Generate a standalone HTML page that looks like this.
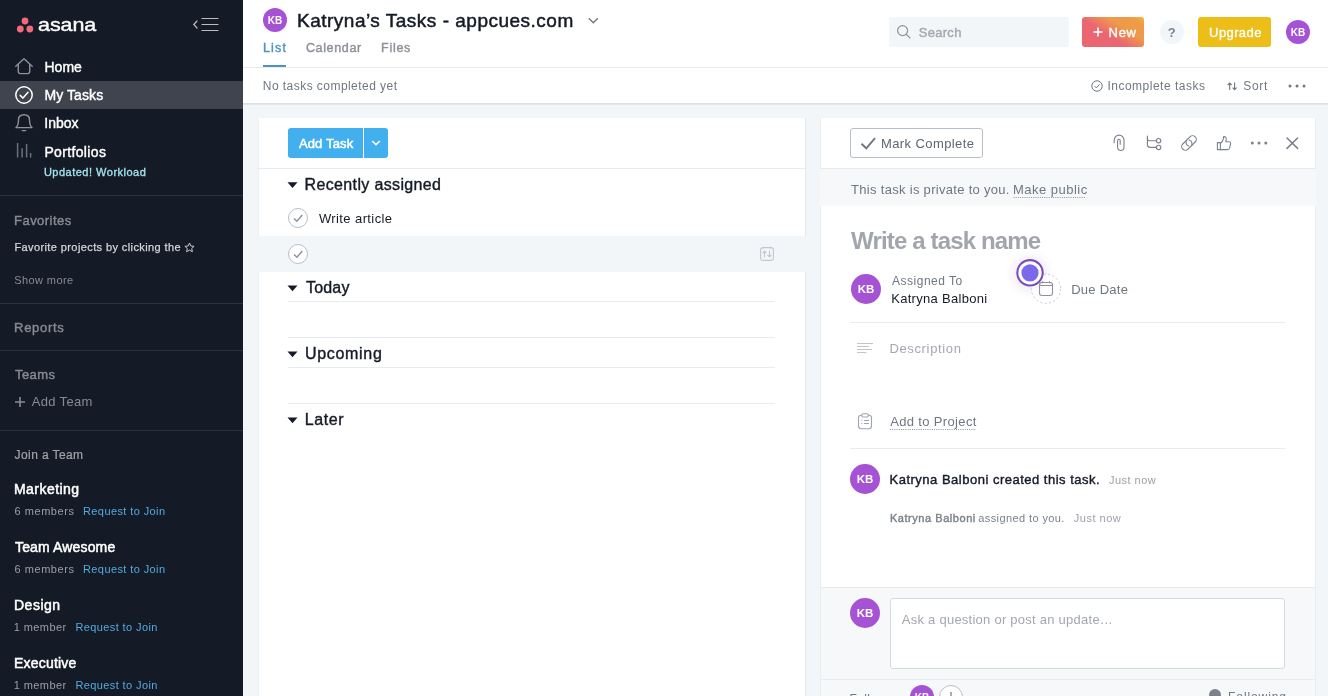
<!DOCTYPE html>
<html><head><meta charset="utf-8"><title>Asana - My Tasks</title>
<style>
*{box-sizing:border-box;margin:0;padding:0}
html,body{width:1328px;height:696px;overflow:hidden}
body{font-family:"Liberation Sans",sans-serif;background:#f3f6f9;color:#151b26;position:relative}
.t{position:absolute;white-space:pre;line-height:20px;height:20px}
.b{position:absolute}
.av{position:absolute;border-radius:50%;background:#a552d4;color:#fff;font-weight:bold;text-align:center}
svg{position:absolute;overflow:visible}
</style></head><body>
<div id="root" style="position:absolute;left:0;top:0;width:1328px;height:696px;will-change:transform">

<!-- ================= SIDEBAR ================= -->
<div class="b" style="left:0;top:0;width:243px;height:696px;background:#151b26"></div>
<div class="b" style="left:0;top:81px;width:243px;height:28px;background:#3f444e"></div>
<div class="b" style="left:0;top:195px;width:243px;height:1px;background:#2c323d"></div>
<div class="b" style="left:0;top:303px;width:243px;height:1px;background:#2c323d"></div>
<div class="b" style="left:0;top:350px;width:243px;height:1px;background:#2c323d"></div>
<div class="b" style="left:0;top:430px;width:243px;height:1px;background:#2c323d"></div>

<!-- logo dots -->
<svg style="left:0;top:0" width="243" height="200" viewBox="0 0 243 200">
  <circle cx="25" cy="21" r="3.4" fill="#f1697a"/>
  <circle cx="20.3" cy="29" r="3.4" fill="#f1697a"/>
  <circle cx="29.8" cy="29" r="3.4" fill="#f1697a"/>
  <!-- collapse icon -->
  <g stroke="#b9bcc1" stroke-width="1.2" fill="none" stroke-linecap="round">
    <path d="M202 18.5H218M202 24.5H218M202 30.5H218"/>
    <path d="M197 21L193.8 24.5L197 28"/>
  </g>
  <!-- home -->
  <g stroke="#8d929a" stroke-width="1.4" fill="none" stroke-linejoin="round" stroke-linecap="round">
    <path d="M15.8 66.2L24 58.8L32.2 66.2"/>
    <path d="M18.3 64.5V71.5Q18.3 73.6 20.4 73.6H27.6Q29.7 73.6 29.7 71.5V64.5"/>
  </g>
  <!-- my tasks check -->
  <g stroke="#ffffff" stroke-width="1.5" fill="none" stroke-linecap="round" stroke-linejoin="round">
    <circle cx="24" cy="95" r="8.2"/>
    <path d="M20.2 95.4L23 98.1L28 92.3"/>
  </g>
  <!-- bell -->
  <g stroke="#8d929a" stroke-width="1.4" fill="none" stroke-linecap="round" stroke-linejoin="round">
    <path d="M16 127.6H32Q29.6 125.6 29.6 122V120.4Q29.6 114.8 24 114.8Q18.4 114.8 18.4 120.4V122Q18.4 125.6 16 127.6Z"/>
    <path d="M22.3 130.6H25.7"/>
  </g>
  <!-- portfolios bars -->
  <g stroke="#6b717b" stroke-width="1.5" fill="none">
    <path d="M17.6 143V157.6M22.1 148.3V157.6M26.6 144V157.6M30.6 153V157.6"/>
  </g>
</svg>
<!-- star after "Favorite projects by clicking the" -->
<svg style="left:184.3px;top:241.6px" width="11" height="11" viewBox="0 0 13 13"><path d="M6.5 1.2L8.1 4.7L11.9 5.1L9.1 7.7L9.9 11.5L6.5 9.6L3.1 11.5L3.9 7.7L1.1 5.1L4.9 4.7Z" fill="none" stroke="#d3d5d9" stroke-width="1.1" stroke-linejoin="round"/></svg>
<!-- plus before Add Team -->
<svg style="left:14px;top:396px" width="12" height="12" viewBox="0 0 12 12"><path d="M6 1V11M1 6H11" stroke="#868b93" stroke-width="1.6" fill="none"/></svg>

<!-- ================= HEADER ================= -->
<div class="b" style="left:243px;top:0;width:1085px;height:103px;background:#fff"></div>
<div class="b" style="left:243px;top:67px;width:1085px;height:1px;background:#e8ecee"></div>
<div class="b" style="left:243px;top:103px;width:1085px;height:2px;background:linear-gradient(#d9dde1,#e6eaee)"></div>
<div class="b" style="left:263px;top:65px;width:23px;height:2px;background:#4a94bd"></div>
<div class="av" style="left:263px;top:8px;width:24px;height:24px;font-size:10px;line-height:25px">KB</div>
<svg style="left:588px;top:17px" width="11" height="8" viewBox="0 0 11 8"><path d="M0.8 1.2L5.3 5.8L9.8 1.2" fill="none" stroke="#6f7782" stroke-width="1.3"/></svg>

<!-- search -->
<div class="b" style="left:889px;top:17px;width:180px;height:30px;background:#f2f6f9;border-radius:3px"></div>
<svg style="left:896px;top:24px" width="16" height="16" viewBox="0 0 16 16"><circle cx="6.6" cy="6.6" r="5" fill="none" stroke="#8d929a" stroke-width="1.2"/><path d="M10.3 10.3L14.3 14.3" stroke="#8d929a" stroke-width="1.2"/></svg>
<!-- new -->
<div class="b" style="left:1082px;top:17px;width:62px;height:30px;border-radius:3px;background:linear-gradient(32deg,#ea6772 0%,#ea6772 41%,#ee9a49 66%,#ee9a49 86%,#f2b730 100%)"></div>
<svg style="left:1093px;top:27px" width="10" height="10" viewBox="0 0 10 10"><path d="M5 0.5V9.5M0.5 5H9.5" stroke="#fff" stroke-width="1.6"/></svg>
<!-- help -->
<div class="b" style="left:1160px;top:20px;width:24px;height:24px;border-radius:50%;background:#f2f6f9"></div>
<!-- upgrade -->
<div class="b" style="left:1198px;top:17px;width:73px;height:30px;border-radius:3px;background:#edbd18"></div>
<div class="av" style="left:1286px;top:20px;width:24px;height:24px;font-size:10px;line-height:25px">KB</div>
<!-- incomplete tasks icon -->
<svg style="left:1091px;top:80px" width="12" height="12" viewBox="0 0 12 12"><circle cx="6" cy="6" r="5.2" fill="none" stroke="#6f7782" stroke-width="1"/><path d="M3.6 6.2L5.3 7.9L8.5 4.3" fill="none" stroke="#6f7782" stroke-width="1"/></svg>
<!-- sort icon -->
<svg style="left:1227px;top:82px" width="11" height="9" viewBox="0 0 11 9"><path d="M2.7 8V1M0.7 3L2.7 1L4.7 3M7.6 0.6V7.6M5.6 5.6L7.6 7.6L9.6 5.6" fill="none" stroke="#6f7782" stroke-width="1.1"/></svg>
<!-- more dots -->
<svg style="left:1288px;top:84px" width="18" height="4" viewBox="0 0 18 4"><circle cx="2" cy="2" r="1.5" fill="#6f7782"/><circle cx="9" cy="2" r="1.5" fill="#6f7782"/><circle cx="16" cy="2" r="1.5" fill="#6f7782"/></svg>

<!-- ================= LIST PANE ================= -->
<div class="b" style="left:258px;top:118px;width:548px;height:578px;background:#fff;border-left:1px solid #eef1f4;border-right:1px solid #e6eaee"></div>
<div class="b" style="left:258px;top:168px;width:547px;height:1px;background:#e8ecee"></div>
<div class="b" style="left:258px;top:236px;width:562px;height:36px;background:#f3f6f9"></div>
<div class="b" style="left:288px;top:128px;width:75px;height:30px;background:#42b0ee;border-radius:3px 0 0 3px"></div>
<div class="b" style="left:364px;top:128px;width:24px;height:30px;background:#42b0ee;border-radius:0 3px 3px 0"></div>
<svg style="left:371px;top:140px" width="10" height="6" viewBox="0 0 10 6"><path d="M1.2 1L5 4.6L8.8 1" fill="none" stroke="#fff" stroke-width="1.5"/></svg>
<!-- section triangles -->
<svg style="left:0;top:0" width="1328" height="696" viewBox="0 0 1328 696">
  <g fill="#151b26">
    <path d="M287.5 182.3H297.5L292.5 188Z"/>
    <path d="M287.5 285.6H297.5L292.5 291.3Z"/>
    <path d="M287.5 351.6H297.5L292.5 357.3Z"/>
    <path d="M287.5 417.6H297.5L292.5 423.3Z"/>
  </g>
  <g stroke="#e8ecee" stroke-width="1">
    <path d="M288 301.5H775M288 337.5H775M288 367.5H775M288 403.5H775"/>
  </g>
  <!-- task check circles -->
  <g fill="#fff" stroke="#b7bfc6" stroke-width="1">
    <circle cx="298" cy="218" r="9.5"/>
    <circle cx="298" cy="254" r="9.5"/>
  </g>
  <g fill="none" stroke="#8c9199" stroke-width="1.4">
    <path d="M294 218.5L296.9 221.3L302.3 215"/>
    <path d="M294 254.5L296.9 257.3L302.3 251"/>
  </g>
  <!-- row action icon -->
  <g fill="none" stroke="#c3c8ce" stroke-width="1.1">
    <rect x="760.6" y="247.6" width="12.8" height="12.8" rx="2.5"/>
    <path d="M763.5 246.7V248.5M770.5 246.7V248.5"/>
    <path d="M764.5 257.5V251M762.6 253L764.5 251L766.4 253M769.5 250.5V257M767.6 255L769.5 257L771.4 255"/>
  </g>
</svg>

<!-- ================= DETAIL PANE ================= -->
<div class="b" style="left:820px;top:118px;width:496px;height:470px;background:#fff;border-left:1px solid #eaeef1;border-right:1px solid #eaeef1"></div>
<div class="b" style="left:820px;top:168px;width:496px;height:38px;background:#f6f8f9;border-top:1px solid #e8ecee"></div>
<div class="b" style="left:820px;top:587px;width:496px;height:109px;background:#f6f8f9;border-top:1px solid #e8ecee;border-left:1px solid #eaeef1;border-right:1px solid #eaeef1"></div>
<div class="b" style="left:820px;top:679px;width:496px;height:1px;background:#e8ecee"></div>
<div class="b" style="left:850px;top:128px;width:133px;height:30px;border:1px solid #b7bfc6;border-radius:3px;background:#fff"></div>
<svg style="left:0;top:0" width="1328" height="696" viewBox="0 0 1328 696">
  <!-- mark complete check -->
  <path d="M861.5 143.8L866.3 148.3L875 138.2" fill="none" stroke="#6f7782" stroke-width="1.9"/>
  <g fill="none" stroke="#7a818b" stroke-width="1.1" stroke-linecap="round" stroke-linejoin="round">
    <!-- paperclip -->
    <path d="M1114.2 142.7V140A4.9 4.9 0 0 1 1124 140V147.3A3.2 3.2 0 0 1 1117.6 147.3V140.6A1.3 1.3 0 0 1 1120.2 140.6V144.2"/>
    <!-- subtask -->
    <path d="M1147.4 136.1V138.6Q1147.4 140.7 1149.5 140.7H1156.3"/>
    <path d="M1147.4 138V144.4Q1147.4 147.4 1150.4 147.4H1156.3"/>
    <circle cx="1158.6" cy="140.7" r="2.2"/>
    <circle cx="1158.6" cy="147.4" r="2.2"/>
    <!-- link -->
    <g transform="rotate(-45 1189 143)">
      <path d="M1188.6 139.3H1183.9A3.7 3.7 0 0 0 1183.9 146.7H1188.1A3.7 3.7 0 0 0 1191.2 141"/>
      <path d="M1189.4 146.7H1194.1A3.7 3.7 0 0 0 1194.1 139.3H1189.9A3.7 3.7 0 0 0 1186.8 145"/>
    </g>
    <!-- thumbs up -->
    <path d="M1217.4 142.6H1220.4V149.6H1217.4Z"/>
    <path d="M1220.4 143.2Q1223.2 141.6 1223.6 136.6Q1226.4 136.4 1226.2 139.6L1225.8 141.8H1229Q1230.8 141.8 1230.6 143.6L1229.6 148Q1229.2 149.6 1227.6 149.6H1220.4"/>
    <!-- close -->
    <path d="M1287 138L1297.6 148.4M1297.6 138L1287 148.4" stroke-width="1.5"/>
  </g>
  <g fill="#7a818b"><circle cx="1252.3" cy="143" r="1.5"/><circle cx="1259" cy="143" r="1.5"/><circle cx="1265.8" cy="143" r="1.5"/></g>
  <!-- dotted underlines -->
  <path d="M1013.5 197.5H1086M890 429.5H976" stroke="#8d939c" stroke-width="1" stroke-dasharray="1 1.2" fill="none"/>
  <!-- separators -->
  <path d="M850 322.5H1285M850 448.5H1285" stroke="#e8ecee" stroke-width="1"/>
  <!-- beacon glow + dashed date circle -->
  <defs><radialGradient id="gl"><stop offset="0.55" stop-color="#f3f0fa"/><stop offset="1" stop-color="#f7f5fc" stop-opacity="0"/></radialGradient></defs><circle cx="1030" cy="274" r="25" fill="url(#gl)"/>
  <circle cx="1046" cy="288.8" r="14.6" fill="#fff" fill-opacity=".6" stroke="#c9cdd3" stroke-width="1" stroke-dasharray="2.2 2.2"/>
  <g fill="none" stroke="#8d929a" stroke-width="1.1">
    <rect x="1039.5" y="282.5" width="13" height="13" rx="2.4"/>
    <path d="M1039.5 285.5H1052.5M1042.5 281.3V283.3M1049.5 281.3V283.3"/>
  </g>
  <circle cx="1030" cy="272.8" r="12.7" fill="#fff" stroke="#7c4cba" stroke-width="2.1"/>
  <circle cx="1030" cy="272.8" r="8.6" fill="#7a6aeb"/>
  <!-- description icon -->
  <path d="M857 343.5H873M857 346.5H869M857 349.5H872M857 352.5H866.5" stroke="#c0c5cb" stroke-width="1"/>
  <!-- clipboard -->
  <g fill="none" stroke="#9ea4ac" stroke-width="1.1">
    <rect x="858.5" y="415.3" width="13" height="13.4" rx="2.6"/>
    <rect x="861.8" y="413.8" width="6.4" height="3.2" rx="1.2" fill="#fff"/>
    <path d="M861.3 420.5H862.3M864 420.5H869M861.3 423.5H862.3M864 423.5H869" stroke-width="1"/>
  </g>
</svg>
<div class="av" style="left:851px;top:274px;width:30px;height:30px;font-size:11.5px;line-height:31px">KB</div>
<div class="av" style="left:850px;top:464px;width:30px;height:30px;font-size:11.5px;line-height:31px">KB</div>
<div class="av" style="left:850px;top:598px;width:30px;height:30px;font-size:11.5px;line-height:31px">KB</div>
<div class="b" style="left:890px;top:598px;width:395px;height:71px;border:1px solid #d5dce0;border-radius:3px;background:#fff"></div>
<div class="av" style="left:910px;top:685px;width:24px;height:24px;font-size:10px;line-height:25px">KB</div>
<div class="b" style="left:939px;top:685px;width:24px;height:24px;border-radius:50%;border:1px solid #b7bfc6;background:#fff"></div>
<svg style="left:946px;top:692px" width="10" height="10" viewBox="0 0 10 10"><path d="M5 0V10M0 5H10" stroke="#6f7782" stroke-width="1.2"/></svg>
<svg style="left:1208px;top:688px" width="14" height="14" viewBox="0 0 14 14"><circle cx="7" cy="7" r="6" fill="#7e8188"/></svg>

<span class="t" style="left:37.6px;top:15.00px;font-size:18.5px;font-weight:normal;color:#ffffff;letter-spacing:-0.05px;transform:scaleX(1.16);transform-origin:0 0;-webkit-text-stroke:0.4px #ffffff;">asana</span>
<span class="t" style="left:44.4px;top:57.00px;font-size:14px;font-weight:normal;color:#ffffff;letter-spacing:0.05px;-webkit-text-stroke:0.4px #ffffff;">Home</span>
<span class="t" style="left:44.4px;top:85.00px;font-size:14px;font-weight:normal;color:#ffffff;letter-spacing:0.10px;-webkit-text-stroke:0.4px #ffffff;">My Tasks</span>
<span class="t" style="left:44.3px;top:113.00px;font-size:14px;font-weight:normal;color:#ffffff;letter-spacing:0.00px;-webkit-text-stroke:0.4px #ffffff;">Inbox</span>
<span class="t" style="left:44.4px;top:142.00px;font-size:14px;font-weight:normal;color:#ffffff;letter-spacing:0.35px;-webkit-text-stroke:0.4px #ffffff;">Portfolios</span>
<span class="t" style="left:43.9px;top:162.00px;font-size:11px;font-weight:normal;color:#a3e3ee;letter-spacing:0.50px;-webkit-text-stroke:0.3px #a3e3ee;">Updated! Workload</span>
<span class="t" style="left:14.1px;top:211.00px;font-size:13px;font-weight:normal;color:#868b93;letter-spacing:0.45px;-webkit-text-stroke:0.4px #868b93;">Favorites</span>
<span class="t" style="left:14.4px;top:237.00px;font-size:11px;font-weight:normal;color:#d3d5d9;letter-spacing:0.40px;-webkit-text-stroke:0.25px #d3d5d9;">Favorite projects by clicking the</span>
<span class="t" style="left:14.3px;top:270.00px;font-size:11px;font-weight:normal;color:#868b93;letter-spacing:0.40px;">Show more</span>
<span class="t" style="left:14.1px;top:318.00px;font-size:13px;font-weight:normal;color:#868b93;letter-spacing:0.70px;-webkit-text-stroke:0.4px #868b93;">Reports</span>
<span class="t" style="left:15.0px;top:365.00px;font-size:13px;font-weight:normal;color:#868b93;letter-spacing:0.40px;-webkit-text-stroke:0.4px #868b93;">Teams</span>
<span class="t" style="left:31.7px;top:392.00px;font-size:13px;font-weight:normal;color:#868b93;letter-spacing:0.35px;">Add Team</span>
<span class="t" style="left:14.6px;top:445.00px;font-size:12px;font-weight:normal;color:#a0a4aa;letter-spacing:0.40px;-webkit-text-stroke:0.2px #a0a4aa;">Join a Team</span>
<span class="t" style="left:14.0px;top:479.00px;font-size:14px;font-weight:normal;color:#ffffff;letter-spacing:0.45px;-webkit-text-stroke:0.5px #ffffff;">Marketing</span>
<span class="t" style="left:14.5px;top:501.00px;font-size:11px;font-weight:normal;color:#9a9fa6;letter-spacing:0.55px;">6 members</span>
<span class="t" style="left:83.0px;top:501.00px;font-size:11px;font-weight:normal;color:#52aae0;letter-spacing:0.40px;">Request to Join</span>
<span class="t" style="left:15.0px;top:537.00px;font-size:14px;font-weight:normal;color:#ffffff;letter-spacing:0.15px;-webkit-text-stroke:0.5px #ffffff;">Team Awesome</span>
<span class="t" style="left:14.5px;top:559.00px;font-size:11px;font-weight:normal;color:#9a9fa6;letter-spacing:0.55px;">6 members</span>
<span class="t" style="left:83.0px;top:559.00px;font-size:11px;font-weight:normal;color:#52aae0;letter-spacing:0.40px;">Request to Join</span>
<span class="t" style="left:14.0px;top:595.00px;font-size:14px;font-weight:normal;color:#ffffff;letter-spacing:0.50px;-webkit-text-stroke:0.5px #ffffff;">Design</span>
<span class="t" style="left:13.8px;top:617.00px;font-size:11px;font-weight:normal;color:#9a9fa6;letter-spacing:0.40px;">1 member</span>
<span class="t" style="left:75.4px;top:617.00px;font-size:11px;font-weight:normal;color:#52aae0;letter-spacing:0.40px;">Request to Join</span>
<span class="t" style="left:14.0px;top:653.00px;font-size:14px;font-weight:normal;color:#ffffff;letter-spacing:0.20px;-webkit-text-stroke:0.5px #ffffff;">Executive</span>
<span class="t" style="left:13.8px;top:675.00px;font-size:11px;font-weight:normal;color:#9a9fa6;letter-spacing:0.40px;">1 member</span>
<span class="t" style="left:75.4px;top:675.00px;font-size:11px;font-weight:normal;color:#52aae0;letter-spacing:0.40px;">Request to Join</span>
<span class="t" style="left:297.0px;top:11.00px;font-size:19px;font-weight:normal;color:#151b26;letter-spacing:0.50px;-webkit-text-stroke:0.5px #151b26;">Katryna’s Tasks - appcues.com</span>
<span class="t" style="left:263.0px;top:38.00px;font-size:12.5px;font-weight:normal;color:#4a94bd;letter-spacing:1.15px;-webkit-text-stroke:0.4px #4a94bd;">List</span>
<span class="t" style="left:305.9px;top:38.00px;font-size:12.5px;font-weight:normal;color:#8c9198;letter-spacing:0.65px;-webkit-text-stroke:0.4px #8c9198;">Calendar</span>
<span class="t" style="left:381.1px;top:38.00px;font-size:12.5px;font-weight:normal;color:#8c9198;letter-spacing:0.70px;-webkit-text-stroke:0.4px #8c9198;">Files</span>
<span class="t" style="left:262.8px;top:76.00px;font-size:12px;font-weight:normal;color:#6f7782;letter-spacing:0.45px;">No tasks completed yet</span>
<span class="t" style="left:918.7px;top:23.00px;font-size:13px;font-weight:normal;color:#a3a8ae;letter-spacing:0.30px;-webkit-text-stroke:0.4px #a3a8ae;">Search</span>
<span class="t" style="left:1108.5px;top:23.00px;font-size:13px;font-weight:normal;color:#ffffff;letter-spacing:0.75px;-webkit-text-stroke:0.35px #ffffff;">New</span>
<span class="t" style="left:1167.7px;top:23.00px;font-size:13px;font-weight:bold;color:#7d838c;letter-spacing:0.80px;">?</span>
<span class="t" style="left:1209.1px;top:23.00px;font-size:13px;font-weight:normal;color:#ffffff;letter-spacing:0.40px;-webkit-text-stroke:0.35px #ffffff;">Upgrade</span>
<span class="t" style="left:1107.4px;top:76.00px;font-size:12px;font-weight:normal;color:#6f7782;letter-spacing:0.50px;">Incomplete tasks</span>
<span class="t" style="left:1243.2px;top:76.00px;font-size:12px;font-weight:normal;color:#6f7782;letter-spacing:0.70px;">Sort</span>
<span class="t" style="left:298.9px;top:134.00px;font-size:13px;font-weight:normal;color:#ffffff;letter-spacing:0.15px;-webkit-text-stroke:0.5px #ffffff;">Add Task</span>
<span class="t" style="left:304.6px;top:175.00px;font-size:16px;font-weight:normal;color:#151b26;letter-spacing:0.35px;-webkit-text-stroke:0.4px #151b26;">Recently assigned</span>
<span class="t" style="left:318.9px;top:209.00px;font-size:13px;font-weight:normal;color:#151b26;letter-spacing:0.40px;">Write article</span>
<span class="t" style="left:306.1px;top:278.00px;font-size:16px;font-weight:normal;color:#151b26;letter-spacing:0.15px;-webkit-text-stroke:0.4px #151b26;">Today</span>
<span class="t" style="left:304.9px;top:344.00px;font-size:16px;font-weight:normal;color:#151b26;letter-spacing:0.70px;-webkit-text-stroke:0.4px #151b26;">Upcoming</span>
<span class="t" style="left:304.8px;top:410.00px;font-size:16px;font-weight:normal;color:#151b26;letter-spacing:0.55px;-webkit-text-stroke:0.4px #151b26;">Later</span>
<span class="t" style="left:881.0px;top:134.00px;font-size:13px;font-weight:normal;color:#5f6670;letter-spacing:0.40px;">Mark Complete</span>
<span class="t" style="left:851.1px;top:180.00px;font-size:13px;font-weight:normal;color:#6f7782;letter-spacing:0.30px;">This task is private to you.</span>
<span class="t" style="left:1012.9px;top:180.00px;font-size:13px;font-weight:normal;color:#6f7782;letter-spacing:0.50px;">Make public</span>
<span class="t" style="left:851.1px;top:231.00px;font-size:24px;font-weight:bold;color:#a2a6ac;letter-spacing:-0.85px;">Write a task name</span>
<span class="t" style="left:892.1px;top:271.00px;font-size:12px;font-weight:normal;color:#6f7782;letter-spacing:0.50px;">Assigned To</span>
<span class="t" style="left:891.2px;top:289.00px;font-size:13px;font-weight:normal;color:#151b26;letter-spacing:0.30px;">Katryna Balboni</span>
<span class="t" style="left:1071.2px;top:280.00px;font-size:13px;font-weight:normal;color:#6f7782;letter-spacing:0.25px;">Due Date</span>
<span class="t" style="left:889.4px;top:339.00px;font-size:13px;font-weight:normal;color:#a3a8ae;letter-spacing:0.65px;">Description</span>
<span class="t" style="left:890.2px;top:412.00px;font-size:13px;font-weight:normal;color:#6f7782;letter-spacing:0.35px;">Add to Project</span>
<span class="t" style="left:889.5px;top:470.00px;font-size:13px;font-weight:normal;color:#151b26;letter-spacing:0.50px;-webkit-text-stroke:0.4px #151b26;">Katryna Balboni created this task.</span>
<span class="t" style="left:1109.1px;top:470.00px;font-size:11px;font-weight:normal;color:#9ca1a8;letter-spacing:0.45px;">Just now</span>
<span class="t" style="left:889.9px;top:508.00px;font-size:11px;font-weight:normal;color:#7a818b;letter-spacing:0.55px;-webkit-text-stroke:0.4px #7a818b;">Katryna Balboni</span>
<span class="t" style="left:978.3px;top:508.00px;font-size:11px;font-weight:normal;color:#7a818b;letter-spacing:0.40px;">assigned to you.</span>
<span class="t" style="left:1073.8px;top:508.00px;font-size:11px;font-weight:normal;color:#9ca1a8;letter-spacing:0.50px;">Just now</span>
<span class="t" style="left:901.8px;top:610.00px;font-size:13px;font-weight:normal;color:#a3a8ae;letter-spacing:0.25px;">Ask a question or post an update…</span>
<span class="t" style="left:849.5px;top:689.00px;font-size:12px;font-weight:normal;color:#6f7782;letter-spacing:0.40px;">Followers</span>
<span class="t" style="left:1228.1px;top:687.00px;font-size:12px;font-weight:normal;color:#6f7782;letter-spacing:0.90px;">Following</span>
</div>
</body></html>
